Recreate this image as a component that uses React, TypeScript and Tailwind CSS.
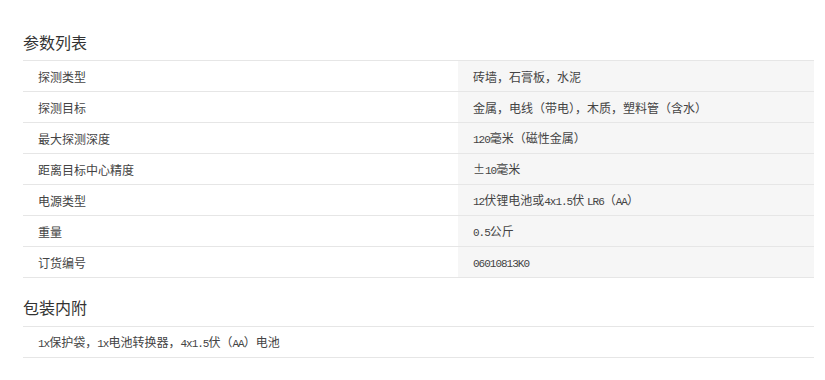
const specs: [string, string][] = [
  ["探测类型", "砖墙，石膏板，水泥"],
  ["探测目标", "金属，电线（带电），木质，塑料管（含水）"],
  ["最大探测深度", "120毫米（磁性金属）"],
  ["距离目标中心精度", "±10毫米"],
  ["电源类型", "12伏锂电池或4x1.5伏 LR6（AA）"],
  ["重量", "0.5公斤"],
  ["订货编号", "06010813K0"],
];

// latin runs are narrower than the CJK glyphs in the original, render them smaller
const Mixed = ({ text }: { text: string }) => {
  const parts = text.split(/([\x21-\x7e][\x20-\x7e]*)/);
  return (
    <span>
      {parts.map((p, i) =>
        /^[\x21-\x7e]/.test(p) ? (
          <span
            key={i}
            className="text-[11px] tracking-[-1px] font-['Liberation_Mono',monospace]"
          >
            {p}
          </span>
        ) : (
          <span key={i}>{p}</span>
        )
      )}
    </span>
  );
};

export default function App() {
  return (
    <div className="w-[825px] h-[380px] bg-white text-[#333] font-['Noto_Sans_CJK_SC',sans-serif]">
      <div className="ml-[23px] w-[791px]">
        {/* Specs */}
        <h3 className="pt-[31px] mb-[7px] text-[16px] leading-[22px] font-normal text-[#333]">
          参数列表
        </h3>
        <div className="border-t border-[#e6e6e6]">
          {specs.map(([label, value]) => (
            <div
              key={label}
              className="flex h-[31px] border-b border-[#e6e6e6] text-[12px] text-[#444]"
            >
              <div className="w-[435px] flex items-center pl-[15px] pt-[2px]">
                <Mixed text={label} />
              </div>
              <div className="flex-1 flex items-center pl-[15px] pt-[2px] bg-[#f6f6f6]">
                <Mixed text={value} />
              </div>
            </div>
          ))}
        </div>

        {/* In the box */}
        <h3 className="mt-[18px] mb-[8px] text-[16px] leading-[22px] font-normal text-[#333]">
          包装内附
        </h3>
        <div className="border-t border-[#e6e6e6]">
          <div className="flex items-center h-[31px] border-b border-[#e6e6e6] pl-[15px] pt-[2px] text-[12px] text-[#444]">
            <Mixed text="1x保护袋，1x电池转换器，4x1.5伏（AA）电池" />
          </div>
        </div>
      </div>
    </div>
  );
}
